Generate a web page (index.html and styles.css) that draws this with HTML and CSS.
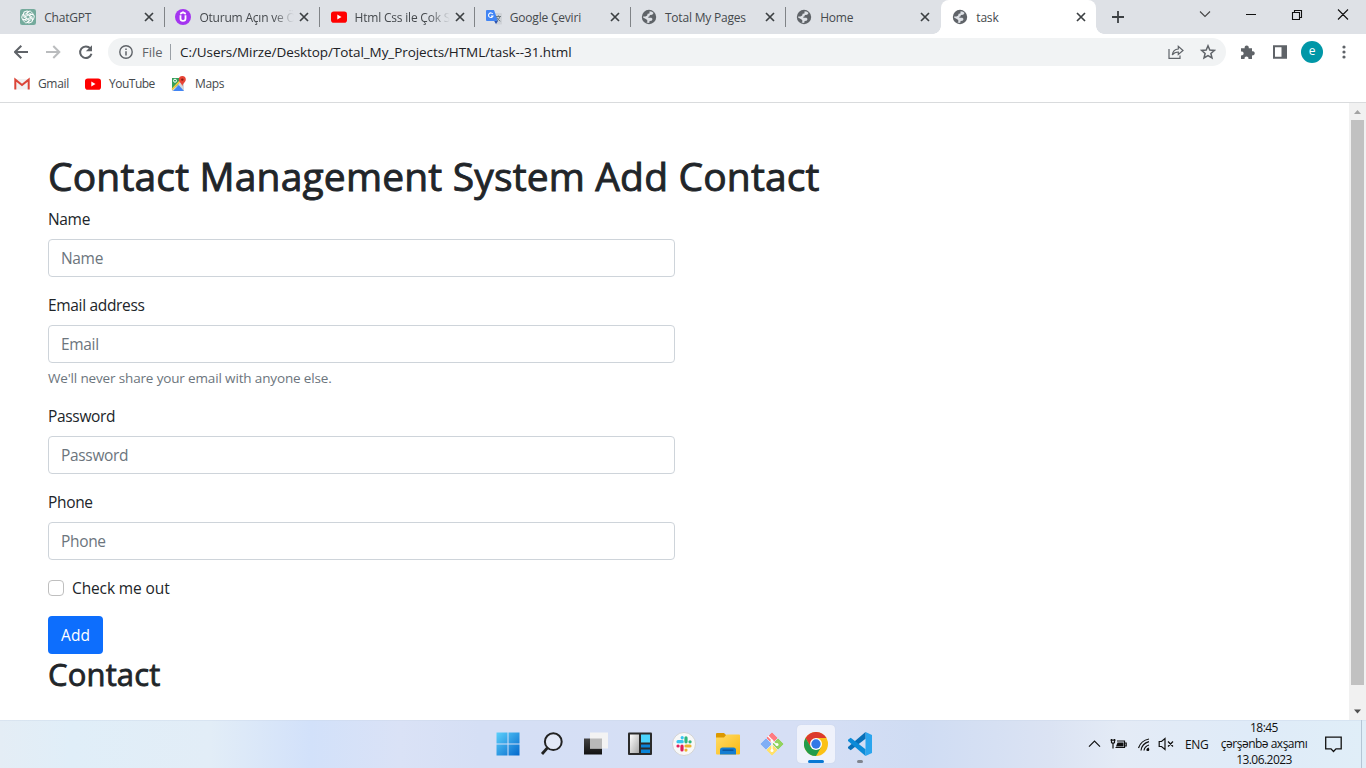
FILE: index.html
```html
<!DOCTYPE html>
<html lang="en">
<head>
<meta charset="utf-8">
<title>task</title>
<link rel="stylesheet" href="styles.css">
</head>
<body>
<svg class="defs" width="0" height="0">
  <symbol id="x" viewBox="0 0 10 10"><path d="M1 1L9 9M9 1L1 9" fill="none" stroke="#3c4043" stroke-width="1.7"/></symbol>
  <symbol id="globe" viewBox="0 0 16 16"><circle cx="8" cy="8" r="7.2" fill="#5f6368"/><path d="M8.6 2.2C10.4 2.3 12 3.1 12.6 4L11.2 5.8 8.9 6 8.4 7.6 6.8 8 7.8 8.8 10.4 8.7 11.6 10 10.6 11.8 8.6 12 8.2 13.9 5.6 13.4 6.6 12 5.6 10.4 2.1 8.6 2.2 7.4 4.4 7.6 6.2 6.6 6.6 4.8 8.4 4.4Z" fill="#dee1e6"/></symbol>
  <symbol id="yt" viewBox="0 0 16 16"><rect y="2.4" width="16" height="11.3" rx="2.8" fill="#f00"/><path d="M6.3 5.6V10.4L10.5 8Z" fill="#fff"/></symbol>
</svg>
<div class="tabs">
  <div class="tab"><svg class="fav" viewBox="0 0 16 16"><rect width="16" height="16" rx="2.3" fill="#74aa9c"/><g fill="none" stroke="#fff" stroke-width=".95"><path id="petal" d="M7.2 7.2V4.4A2.4 2.4 0 0 1 11.6 3.2 2.6 2.6 0 0 1 12.8 6L10 4.5 7.2 6.1"/><use href="#petal" transform="rotate(60 8 8)"/><use href="#petal" transform="rotate(120 8 8)"/><use href="#petal" transform="rotate(180 8 8)"/><use href="#petal" transform="rotate(240 8 8)"/><use href="#petal" transform="rotate(300 8 8)"/></g></svg><span class="title">ChatGPT</span><svg class="x"><use href="#x"/></svg></div>
  <div class="tab"><svg class="fav" viewBox="0 0 16 16"><circle cx="8" cy="8" r="8" fill="#a435f0"/><path d="M5.5 6.3V9.4Q5.5 11.8 8 11.8T10.5 9.4V6.3M5.2 4.9L8 3.3 10.8 4.9" fill="none" stroke="#fff" stroke-width="1.8"/></svg><span class="title fade">Oturum Açın ve Ö</span><svg class="x"><use href="#x"/></svg></div>
  <div class="tab"><svg class="fav"><use href="#yt"/></svg><span class="title fade">Html Css ile Çok S</span><svg class="x"><use href="#x"/></svg></div>
  <div class="tab"><svg class="fav" viewBox="0 0 16 16"><path d="M6 4H15Q16 4 16 5V14.5Q16 15.5 15 15.5H10Z" fill="#d0d3d8"/><path d="M1 1H8L12 12H1Q0 12 0 11V2Q0 1 1 1Z" fill="#4285f4"/><path d="M8.2 12H12L10 15Z" fill="#2850b0"/><path d="M6.8 5A2.3 2.3 0 1 0 7 7H4.9" fill="none" stroke="#fff" stroke-width="1.1"/><path d="M9.8 7.5H15M12.4 6.4V7.5M14 7.7Q13 10.5 10.8 12M11 8.5Q12 11 14.4 12.2" fill="none" stroke="#68757b" stroke-width=".9"/></svg><span class="title">Google Çeviri</span><svg class="x"><use href="#x"/></svg></div>
  <div class="tab"><svg class="fav"><use href="#globe"/></svg><span class="title">Total My Pages</span><svg class="x"><use href="#x"/></svg></div>
  <div class="tab last"><svg class="fav"><use href="#globe"/></svg><span class="title">Home</span><svg class="x"><use href="#x"/></svg></div>
  <div class="tab active"><svg class="fav"><use href="#globe"/></svg><span class="title">task</span><svg class="x"><use href="#x"/></svg></div>
  <svg class="plus" viewBox="0 0 12 12"><path d="M6 0V12M0 6H12" stroke="#3c4043" stroke-width="1.8"/></svg>
  <svg class="winctl" viewBox="0 0 150 16"><g fill="none" stroke="#111" stroke-width="1.1"><path d="M1 5.5L6 10.5 11 5.5" stroke="#444"/><path d="M47 8.5H57M93.5 6.5H100.5V13.5H93.5ZM95.5 6.5V4.5H102.5V11.5H100.5M139 3.5L149 13.5M149 3.5L139 13.5"/></g></svg>
</div>
<div class="toolbar">
  <svg class="nav" viewBox="0 0 80 16"><g fill="none" stroke-width="2"><path d="M14 8H1.5M7.3 1.7L1 8 7.3 14.3" stroke="#5f6368"/><path d="M32 8H45M39.3 2L45.3 8 39.3 14" stroke="#babcbe"/><path d="M76.3 4.4A5.8 5.8 0 1 0 77.5 9.8" stroke="#5f6368"/></g><path d="M78 1.2V7.3H71.8Z" fill="#5f6368"/></svg>
  <div class="omni">
    <svg class="info" viewBox="0 0 14 14"><circle cx="7" cy="7" r="6.2" fill="none" stroke="#5f6368" stroke-width="1.4"/><path d="M7 6.2V10.5M7 3.5V5" stroke="#5f6368" stroke-width="1.5"/></svg>
    <span class="file">File</span><span class="url">C:/Users/Mirze/Desktop/Total_My_Projects/HTML/task--31.html</span>
    <svg class="share" viewBox="0 0 48 16"><g fill="none" stroke="#5f6368" stroke-width="1.2"><path d="M1 5V14.3H12V11.5M4.3 11C4.8 7.3 7 5.2 10.3 5V2.4L15 6.5 10.3 10.4V8Q6.5 8 4.3 11Z"/><path d="M40 1.8L41.8 6 46.4 6.4 42.9 9.5 44 14 40 11.6 36 14 37.1 9.5 33.6 6.4 38.2 6Z" stroke-width="1.5"/></g></svg>
  </div>
  <svg class="ext" viewBox="0 0 48 16"><path d="M1 4.2H4.7A2.1 2.1 0 1 1 8.7 4.2H12V7.3A2.1 2.1 0 1 1 12 11.3V15H8.4A2 2 0 1 0 4.6 15H1V11.3A2 2 0 1 0 1 7.5Z" fill="#5f6368"/><path d="M34 2.2H46V13.8H34Z" fill="none" stroke="#5f6368" stroke-width="2"/><path d="M41.5 2H46V14H41.5Z" fill="#5f6368"/></svg>
  <span class="avatar">e</span>
  <svg class="dots" viewBox="0 0 4 16"><g fill="#5f6368"><circle cx="2" cy="3" r="1.6"/><circle cx="2" cy="8" r="1.6"/><circle cx="2" cy="13" r="1.6"/></g></svg>
</div>
<div class="marks">
  <span class="mark gmail"><svg viewBox="0 0 16 16"><path d="M1.5 3H14.5V13.5H1.5Z" fill="#f1f1f1"/><path d="M1.3 13.5V3.6L8 9 14.7 3.6V13.5" fill="none" stroke="#db4437" stroke-width="2"/></svg>Gmail</span>
  <span class="mark you"><svg><use href="#yt"/></svg>YouTube</span>
  <span class="mark maps"><svg viewBox="0 0 16 16"><path d="M1 2H13V15H1Z" fill="#d5d8db"/><path d="M1 2H10L7 9 1 14Z" fill="#34a05a"/><path d="M2 15L7.7 9 13 15Z" fill="#4285f4"/><path d="M1 13.5L10 4" stroke="#fbca3d" stroke-width="1.8"/><circle cx="4" cy="4.7" r="1.5" fill="none" stroke="#fff"/><path d="M11.3 0A3.5 3.5 0 0 1 14.8 3.5C14.8 6 11.8 7 11.3 10.5 10.8 7 7.8 6 7.8 3.5A3.5 3.5 0 0 1 11.3 0Z" fill="#e84435"/><circle cx="11.3" cy="3.6" r="1.2" fill="#8a1c14"/></svg>Maps</span>
</div>
<div class="view">
  <form class="page">
    <h1>Contact Management System Add Contact</h1>
    <div class="field"><label>Name</label><input placeholder="Name"></div>
    <div class="field"><label>Email address</label><input placeholder="Email"><small>We'll never share your email with anyone else.</small></div>
    <div class="field"><label>Password</label><input placeholder="Password"></div>
    <div class="field"><label>Phone</label><input placeholder="Phone"></div>
    <div class="check"><span class="box"></span><span>Check me out</span></div>
    <button type="button">Add</button>
    <h2>Contact</h2>
  </form>
  <div class="scroll"><svg viewBox="0 0 17 17"><path d="M5 11L8.5 7 12 11Z" fill="#a3a3a3"/></svg><div class="thumb"></div><svg viewBox="0 0 17 17"><path d="M5 6.5H12L8.5 10.5Z" fill="#505050"/></svg></div>
</div>
<div class="taskbar">
  <div class="apps">
    <div class="app"><svg viewBox="0 0 24 24"><defs><linearGradient id="w" x2="1" y2="1"><stop stop-color="#5cd0fb"/><stop offset="1" stop-color="#0468cc"/></linearGradient></defs><path d="M.5 .5H11.5V11.5H.5ZM12.5 .5H23.5V11.5H12.5ZM.5 12.5H11.5V23.5H.5ZM12.5 12.5H23.5V23.5H12.5Z" fill="url(#w)"/></svg></div>
    <div class="app"><svg viewBox="0 0 24 24"><circle cx="13.3" cy="9.7" r="8.4" fill="#e3e9f7" stroke="#222" stroke-width="2"/><path d="M7.3 16L2 22" stroke="#222" stroke-width="2.8"/></svg></div>
    <div class="app"><svg viewBox="0 0 24 24"><defs><linearGradient id="tv" x2="0" y2="1"><stop stop-color="#444"/><stop offset="1" stop-color="#111"/></linearGradient></defs><path d="M0 6.5H18V22.5H0Z" fill="url(#tv)"/><path d="M6 .5H24V16.5H6Z" fill="#f3f3f3"/><path d="M6 6.5H18V16.5H6Z" fill="#b9b9b9"/></svg></div>
    <div class="app"><svg viewBox="0 0 24 24"><defs><linearGradient id="wg" x2="1" y2="1"><stop stop-color="#fff"/><stop offset="1" stop-color="#a8a8a8"/></linearGradient></defs><rect y=".5" width="24" height="22.5" rx="1" fill="#2b2b2b"/><path d="M2 2.5H11V21H2Z" fill="url(#wg)"/><path d="M13 2.5H22V10.5H13Z" fill="#4cd4fc"/><path d="M13 12.5H22V15.5H13ZM13 17.5H22V21H13Z" fill="#0a84d8"/></svg></div>
    <div class="app"><svg viewBox="0 0 24 24"><circle cx="12" cy="12" r="11.5" fill="#f8f8f8" stroke="#ccc" stroke-width=".8"/><g stroke-width="3.2" stroke-linecap="round"><path d="M10.2 9.7H6M10.2 5.6V5.8" stroke="#36c5f0"/><path d="M14 5.8V9.8M18 9.8H18.1" stroke="#2eb67d"/><path d="M14 14H18M14 18V18.1" stroke="#ecb22e"/><path d="M10 14V18M6 14H6.1" stroke="#e01e5a"/></g></svg></div>
    <div class="app"><svg viewBox="0 0 24 24"><defs><linearGradient id="fd" x2="1" y2="1"><stop stop-color="#ffdc68"/><stop offset="1" stop-color="#fbb912"/></linearGradient></defs><path d="M0 6V2Q0 1 1 1H8L10.5 3.5 9 6Z" fill="#dc9800"/><path d="M0 5.5H8L10.5 2.5H23Q24 2.5 24 3.5V21.5Q24 22.5 23 22.5H1Q0 22.5 0 21.5Z" fill="url(#fd)"/><path d="M4 22.5V18Q4 15.5 6.5 15.5H17.5Q20 15.5 20 18V22.5Z" fill="#147dd1"/><path d="M6.5 18.2H17.5" stroke="#0b559d" stroke-width="1.5"/></svg></div>
    <div class="app"><svg viewBox="0 0 24 24"><g stroke="#d6dff5" stroke-width=".8"><path d="M12 0L18 6 12 12 6 6Z" fill="#ff7b80"/><path d="M18 6L24 12 18 18 12 12Z" fill="#92d35f"/><path d="M12 12L18 18 12 24 6 18Z" fill="#ffe16c"/><path d="M6 6L12 12 6 18 0 12Z" fill="#80aef5"/></g><path d="M8 4L12 8V19M12 9L17 13" fill="none" stroke="#fff" stroke-width="1.2"/><circle cx="12" cy="9" r="1.6" fill="#fff"/><circle cx="17" cy="12.5" r="1.5" fill="#fff"/><circle cx="12" cy="18.5" r="1.5" fill="#fff"/></svg></div>
    <div class="app on"><svg viewBox="0 0 24 24"><circle cx="12" cy="12" r="12" fill="#fbc116"/><path d="M1.6 6A12 12 0 0 1 22.4 6H12L6.8 15Z" fill="#dc3a2e"/><path d="M1.6 6A12 12 0 0 0 12 24L17.2 15 12 17.5 6.8 15Z" fill="#239c4b"/><circle cx="12" cy="12" r="6" fill="#fff"/><circle cx="12" cy="12" r="4.7" fill="#3378e6"/></svg></div>
    <div class="app run"><svg viewBox="0 0 24 24"><path d="M17.5 0L24 3V21L17.5 24Z" fill="#2aa5ee"/><path d="M17.5 0V6.8L2.7 18.3 0 16.2V15Z" fill="#0870b8"/><path d="M0 9V7.8L2.7 5.7 17.5 17.2V24Z" fill="#0b8bd8"/></svg></div>
  </div>
  <div class="tray">
    <svg class="sys" viewBox="0 0 90 18"><g fill="none" stroke="#111" stroke-width="1.2"><path d="M1 11.7L6.5 6.2 12 11.7"/><path d="M29 6H36.5V12.5H27.5M37 8H38.2V11H37"/><path d="M23.5 4V7.5Q25 9 26.5 7.5V4M22.5 5.2H27.5M25 8.5V13.5"/><path d="M53 15.5Q54 8.5 61 6.7M50.5 13Q53 5.5 61 4M56 15.5Q56.5 11.5 61 10M58.8 15.5Q59 13.5 61 13"/><path d="M71.2 6.5H73.5L77 3.5V14.5L73.5 11.5H71.2ZM80 6.5L85 11.5M85 6.5L80 11.5"/></g><path d="M29.5 7.5H35.5V11.5H28Z" fill="#111"/><circle cx="60" cy="14.7" r="1.3"/></svg>
    <span class="eng">ENG</span>
    <div class="clock"><span class="t1">18:45</span><span class="t2">çərşənbə axşamı</span><span class="t3">13.06.2023</span></div>
    <svg class="note" viewBox="0 0 17 17"><path d="M.7 1.2H16.2V12.8H11L8.5 15.5 6 12.8H.7Z" fill="none" stroke="#111" stroke-width="1.3"/></svg>
    <span class="peek"></span>
  </div>
</div>
</body>
</html>
```
FILE: styles.css
```css
* { box-sizing: border-box; }
body { margin: 0; width: 1366px; height: 768px; overflow: hidden; display: flex; flex-direction: column; background: #fff; color: #212529; font-family: "Open Sans", "Noto Sans", sans-serif; }
svg { display: block; flex: none; }
.defs { position: absolute; }

.tabs { height: 34px; flex: none; display: flex; align-items: center; background: #dee1e6; padding-left: 9.8px; }
.tab { width: 155.2px; height: 34px; flex: none; display: flex; align-items: center; padding: 0 10.4px; position: relative; font-size: 12px; letter-spacing: -.2px; color: #45494d; }
.tab::after { content: ""; position: absolute; right: 0; top: 7px; width: 1px; height: 20px; background: #808387; }
.tab.last::after { display: none; }
.tab.active { background: #fff; border-radius: 8px 8px 0 0; padding-left: 11.4px; }
.tab.active::before, .tab.active::after { content: ""; position: absolute; background: none; top: auto; bottom: 0; width: 8px; height: 8px; }
.tab.active::before { left: -8px; background: radial-gradient(circle at 0 0, #dee1e6 7.5px, #fff 8px); }
.tab.active::after { right: -8px; background: radial-gradient(circle at 100% 0, #dee1e6 7.5px, #fff 8px); }
.fav { width: 16px; height: 16px; margin-right: 8px; }
.title { width: 95px; white-space: nowrap; }
.fade { -webkit-mask-image: linear-gradient(90deg, #000 74px, transparent 95px); mask-image: linear-gradient(90deg, #000 74px, transparent 95px); }
.x { width: 10px; height: 10px; margin-left: 5px; }
.plus { width: 12px; height: 12px; margin-left: 16px; }
.winctl { width: 150px; height: 16px; margin: -6px 17px 0 auto; }

.toolbar { height: 36px; flex: none; display: flex; align-items: center; padding-left: 14px; }
.nav { width: 80px; height: 16px; }
.omni { width: 1118px; height: 28px; margin-left: 14px; border-radius: 14px; background: #f1f3f4; display: flex; align-items: center; padding: 0 10px 0 11px; font-size: 14px; white-space: nowrap; }
.info { width: 14px; height: 14px; }
.file { width: 29px; margin-left: 9px; margin-right: 9px; line-height: 16px; border-right: 1px solid #9aa0a6; color: #5f6368; font-size: 13px; }
.url { color: #202124; font-size: 13.5px; letter-spacing: -.08px; }
.share { width: 48px; height: 16px; margin-left: auto; }
.ext { width: 48px; height: 16px; margin-left: 14px; }
.avatar { width: 22px; height: 22px; border-radius: 50%; background: #0097a7; color: #fff; font-size: 12px; line-height: 20px; text-align: center; margin-left: 13px; }
.dots { width: 4px; height: 16px; margin-left: 19px; }
.marks { height: 33px; flex: none; display: flex; align-items: center; padding: 0 0 5px 14px; border-bottom: 1px solid #d9dbdd; font-size: 12px; letter-spacing: -.35px; color: #45494d; }
.mark { display: flex; align-items: center; gap: 8px; }
.mark svg { width: 16px; height: 16px; }
.gmail { width: 71px; }
.you { width: 86px; letter-spacing: -.5px; }

.view { height: 617px; flex: none; display: flex; }
.page { flex: 1; padding: 49px 48px 0; font-size: 16px; line-height: 24px; }
h1 { margin: 0 0 7px; font-size: 39px; line-height: 48px; font-weight: 500; letter-spacing: .16px; white-space: nowrap; -webkit-text-stroke: .9px #212529; }
.field { width: 627px; margin-bottom: 16px; }
label { display: block; margin-bottom: 8px; font-size: 15.5px; letter-spacing: -.33px; }
input { display: block; width: 100%; height: 38px; padding: 6px 12px; border: 1px solid #ced4da; border-radius: 4px; font: 15.5px/24px "Open Sans", "Noto Sans", sans-serif; letter-spacing: -.33px; }
input::placeholder { color: #6c757d; opacity: 1; }
small { display: block; margin-top: 5px; margin-bottom: -1px; font-size: 13.5px; line-height: 21px; letter-spacing: -.15px; color: #6c757d; }
.check { display: flex; align-items: center; gap: 8px; height: 24px; margin-bottom: 16px; font-size: 15.5px; letter-spacing: -.12px; }
.box { width: 16px; height: 16px; border: 1px solid #bfbfbf; border-radius: 4px; }
button { display: block; width: 55px; height: 38px; padding: 0; border: 0; border-radius: 4px; background: #0d6efd; color: #fff; font: 15.5px/24px "Open Sans", sans-serif; }
h2 { margin: 1px 0 0; font-size: 31px; line-height: 38px; font-weight: 500; letter-spacing: .15px; -webkit-text-stroke: .8px #212529; }
.scroll { width: 17px; background: #f1f1f1; display: flex; flex-direction: column; align-items: center; }
.scroll svg { width: 17px; height: 17px; }
.thumb { width: 13px; height: 565px; margin-bottom: auto; background: #c1c1c1; }

.taskbar { height: 48px; flex: none; display: flex; justify-content: space-between; padding-left: 486px; box-shadow: inset 0 1px #cad7e866; color: #111; background: linear-gradient(90deg, #e4edf5 0, #e0eef8 70px, #e2edf7 210px, #d2e1fa 310px, #dae2f6 400px, #d5dff5 480px, #d6dff5 800px, #cfdcf3 920px, #dbe3f3 1050px, #e4ebf6 1120px, #dfebf8 1250px, #e0eef8 1366px); }
.apps { display: flex; align-items: center; }
.app { width: 38px; height: 38px; margin: 0 3px; display: grid; place-items: center; position: relative; border-radius: 4px; }
.app svg { width: 24px; height: 24px; }
.on { background: #eff2fb; box-shadow: 0 0 1px #bcc7dc; }
.on::after, .run::after { content: ""; position: absolute; bottom: 0; width: 16px; height: 3px; border-radius: 2px; background: #0878d4; }
.run::after { width: 6px; background: #80858f; }
.tray { display: flex; align-items: center; font-size: 12px; }
.sys { width: 90px; height: 18px; }
.eng { width: 30px; margin-left: 7px; letter-spacing: -.4px; }
.clock { width: 98px; display: flex; flex-direction: column; align-items: center; line-height: 16px; white-space: nowrap; }
.t1, .t3 { letter-spacing: -.55px; }
.t2 { letter-spacing: -.5px; }
.note { width: 17px; height: 17px; margin-left: 12px; }
.peek { width: 1px; height: 48px; margin: 0 4px 0 19px; background: #b5c5d5; }
```
